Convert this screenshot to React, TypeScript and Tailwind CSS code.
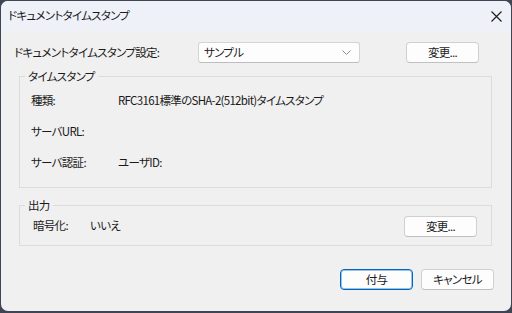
export default function App() {
  const font =
    "font-['Noto_Sans_CJK_JP','Noto_Sans',sans-serif] [font-feature-settings:'palt'] tracking-[-0.7px]";
  const btn =
    "flex h-[21px] w-[73px] items-center justify-center rounded-[4px] border border-[#d0d0d0] border-b-[#c0c0c0] bg-[#fdfdfd] text-[11.5px] text-[#1b1b1b]";

  return (
    <div className={`h-[313px] w-[512px] bg-[#3f4653] px-px pt-px pb-[2px] ${font}`}>
      <div className="flex h-full flex-col overflow-hidden rounded-[7px] bg-[#f0f0f0]">
        {/* title bar */}
        <div className="flex h-[30px] items-center justify-between bg-[#eef2f8] pl-[7px] pr-[9px]">
          <span className="text-[11.5px] text-[#1a1a1a]">ドキュメントタイムスタンプ</span>
          <svg width="11" height="11" viewBox="0 0 11 11" className="text-[#1a1a1a]">
            <path d="M0.5 0.5 L10.5 10.5 M10.5 0.5 L0.5 10.5" stroke="currentColor" strokeWidth="1.1" />
          </svg>
        </div>

        <div className="flex flex-col pt-[11px] text-[11.5px] text-[#1a1a1a]">
          {/* setting row */}
          <div className="flex items-center">
            <span className="ml-[13px] w-[184px]">ドキュメントタイムスタンプ設定:</span>
            <div className="flex h-[21px] w-[162px] items-center justify-between rounded-[3px] border border-[#d4d4d4] border-b-[#bdbdbd] bg-[#fdfdfd] pl-[5px] pr-[8px]">
              <span>サンプル</span>
              <svg width="9" height="5" viewBox="0 0 9 5">
                <path d="M0.5 0.5 L4.5 4.5 L8.5 0.5" fill="none" stroke="#8a8a8a" strokeWidth="1" />
              </svg>
            </div>
            <button className={`${btn} ml-[46px]`}>変更...</button>
          </div>

          {/* timestamp group */}
          <div className="relative ml-[18px] mt-[13px] h-[112px] w-[473px] border border-[#dcdcdc]">
            <span className="absolute -top-[9px] left-[5px] bg-[#f0f0f0] px-[3px] leading-[16px]">タイムスタンプ</span>
            <div className="flex flex-col gap-[15px] pl-[11px] pt-[15px] leading-[16px]">
              <div className="flex">
                <span className="w-[87px]">種類:</span>
                <span>RFC3161標準のSHA-2(512bit)タイムスタンプ</span>
              </div>
              <div className="flex">
                <span className="w-[87px]">サーバURL:</span>
              </div>
              <div className="flex">
                <span className="w-[87px]">サーバ認証:</span>
                <span>ユーザID:</span>
              </div>
            </div>
          </div>

          {/* output group */}
          <div className="relative ml-[18px] mt-[17px] flex h-[41px] w-[473px] items-center border border-[#dcdcdc]">
            <span className="absolute -top-[9px] left-[5px] bg-[#f0f0f0] px-[3px] leading-[16px]">出力</span>
            <span className="ml-[13px] w-[57px]">暗号化:</span>
            <span>いいえ</span>
            <button className={`${btn} ml-auto mr-[14px] mt-[2px]`}>変更...</button>
          </div>

          {/* footer */}
          <div className="mt-[23px] flex justify-end gap-[8px] pr-[17px]">
            <button className="flex h-[21px] w-[73px] items-center justify-center rounded-[4px] border border-[#0067c0] bg-[#fdfdfd] text-[11.5px] text-[#1b1b1b] shadow-[inset_0_0_0_1px_#9cc3e6]">
              付与
            </button>
            <button className={btn}>キャンセル</button>
          </div>
        </div>
      </div>
    </div>
  );
}
